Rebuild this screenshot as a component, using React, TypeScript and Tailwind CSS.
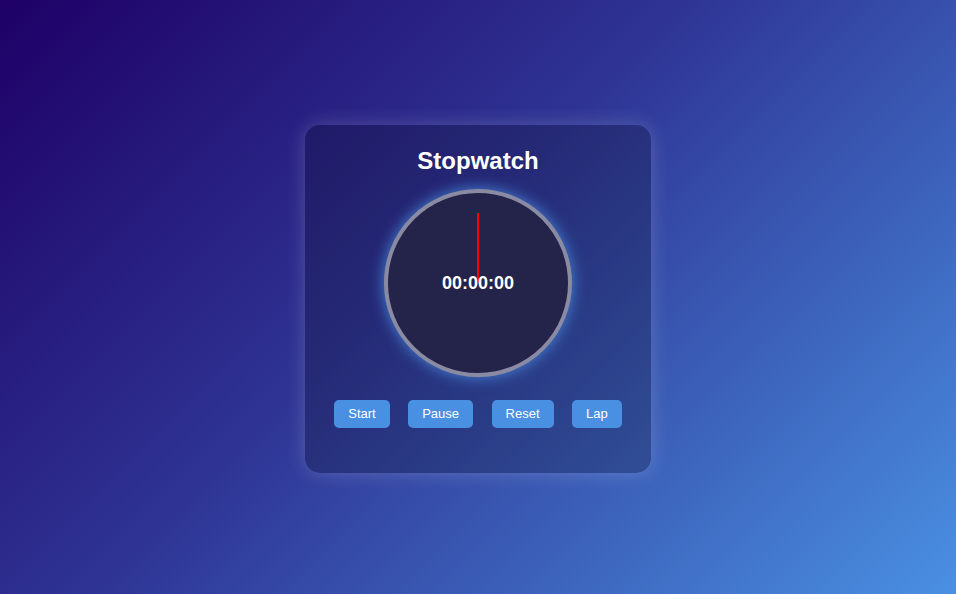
export default function App() {
  const buttons = ["Start", "Pause", "Reset", "Lap"]

  return (
    <div className="h-[594px] w-full pt-[4px] flex items-center justify-center bg-[linear-gradient(135deg,#1e0066_0%,#2f3595_45%,#4a90e2_100%)] font-['Liberation_Sans',Arial,sans-serif]">
      <div className="w-[346px] h-[348px] rounded-[15px] bg-black/20 shadow-[0_0_20px_rgba(255,255,255,0.2)] px-5 pt-[22px] flex flex-col items-center">
        <h2 className="text-[24px] leading-[28px] font-bold text-white">Stopwatch</h2>

        {/* dial */}
        <div className="relative mt-[14px] w-[188px] h-[188px] rounded-full border-4 border-[#8b8aa3] bg-[#24234a] shadow-[0_0_15px_rgba(74,144,226,0.9)] flex items-center justify-center">
          <div className="absolute left-[89px] top-[20px] w-[2px] h-[70px] bg-[#ff0000]" />
          <span className="relative text-[18px] font-bold text-white">00:00:00</span>
        </div>

        <div className="mt-[23px] w-full flex justify-around">
          {buttons.map((label) => (
            <button
              key={label}
              className="px-[14px] py-[7px] rounded-[5px] bg-[#4a90e2] text-white text-[13px] leading-[14px]"
            >
              {label}
            </button>
          ))}
        </div>
      </div>
    </div>
  )
}
